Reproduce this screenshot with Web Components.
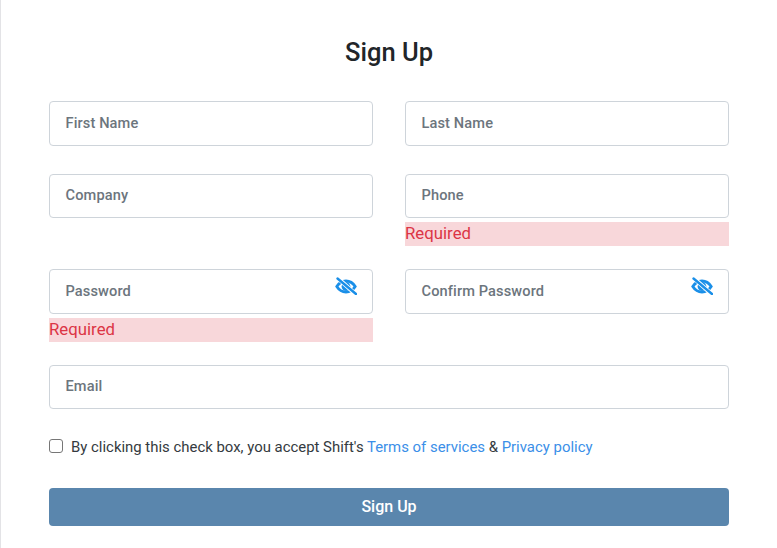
<!DOCTYPE html>
<html>
<head>
<meta charset="utf-8">
<title>Sign Up</title>
<style>
  html, body { margin: 0; background: #fff; }
  body { font-family: Roboto, "Liberation Sans", sans-serif; }
</style>
</head>
<body>
<signup-form>
  <form-field label="First Name"></form-field>
  <form-field label="Last Name"></form-field>
  <form-field label="Company"></form-field>
  <form-field label="Phone" error="Required"></form-field>
  <form-field label="Password" eye error="Required"></form-field>
  <form-field label="Confirm Password" eye></form-field>
  <form-field label="Email" class="wide"></form-field>
</signup-form>

<script>
'use strict'

const eyeOff = `
  <svg width="22" height="18" viewBox="0 0 22 18" fill="none" aria-hidden="true">
    <path d="M1.8 9.5 C4 6 7.5 4 11 4 C14.5 4 18 6 20.2 9.5 C18 13 14.5 15 11 15 C7.5 15 4 13 1.8 9.5 Z" stroke="#1a8fe8" stroke-width="2.8"/>
    <circle cx="11" cy="9.5" r="4.4" fill="#1a8fe8"/>
    <path d="M2 0.5 L21 17.5" stroke="#fff" stroke-width="4.2"/>
    <path d="M2.5 1.5 L21 17" stroke="#1a8fe8" stroke-width="2.4" stroke-linecap="round"/>
  </svg>`

customElements.define('form-field', class extends HTMLElement {
  constructor() {
    super()
    const label = this.getAttribute('label')
    const error = this.getAttribute('error')
    const eye = this.hasAttribute('eye')
    this.attachShadow({ mode: 'open' }).innerHTML = `
      <style>
        :host { display: block; min-width: 0; }
        .box {
          box-sizing: border-box;
          height: 44.7px;
          display: flex;
          align-items: center;
          justify-content: space-between;
          padding: 0 15px 1.6px 15.5px;
          background: #fff;
          border: 1px solid #ced4da;
          border-radius: 4px;
        }
        .label { font-size: 14.6px; font-weight: 500; color: #6c757d; letter-spacing: .12px; }
        .eye { display: flex; margin-top: -9px; }
        .error {
          height: 24px;
          margin-top: 4px;
          background: #f8d7da;
          color: #dc3545;
          font-size: 16.8px;
          line-height: 23px;
        }
        .spacer { height: 5.2px; }
      </style>
      <div class="box">
        <span class="label">${label}</span>
        ${eye ? `<span class="eye">${eyeOff}</span>` : ''}
      </div>
      ${error ? `<div class="error">${error}</div>` : '<div class="spacer"></div>'}
    `
  }
})

customElements.define('signup-form', class extends HTMLElement {
  constructor() {
    super()
    this.attachShadow({ mode: 'open' }).innerHTML = `
      <style>
        :host {
          display: block;
          box-sizing: border-box;
          width: 777px;
          height: 548px;
          overflow: hidden;
          padding: 38px 48px 0 48px;
          border-left: 1px solid #e3e3e6;
          font-family: Roboto, "Liberation Sans", sans-serif;
        }
        h1 {
          margin: 0 0 34px;
          height: 29px;
          font-size: 25.5px;
          line-height: 29px;
          font-weight: 500;
          color: #212529;
          text-align: center;
        }
        .grid {
          display: grid;
          grid-template-columns: 324px 324px;
          column-gap: 32px;
          row-gap: 22.8px;
          align-items: start;
        }
        ::slotted(.wide) { grid-column: 1 / 3; }
        .terms {
          display: flex;
          align-items: center;
          gap: 8.5px;
          margin-top: 22.8px;
          height: 20px;
          font-size: 14.92px;
          color: #343a40;
        }
        .check {
          box-sizing: border-box;
          width: 13.5px;
          height: 13.5px;
          margin-top: -3px;
          border: 1px solid #767676;
          border-radius: 3px;
          background: #fff;
        }
        a { color: #3b8fe8; text-decoration: none; }
        button {
          display: block;
          width: 680px;
          height: 38px;
          margin-top: 31px;
          padding: 0 0 2px;
          border: 0;
          border-radius: 4px;
          background: #5a86ad;
          color: #fff;
          font: 500 16px Roboto, "Liberation Sans", sans-serif;
        }
      </style>
      <h1>Sign Up</h1>
      <div class="grid"><slot></slot></div>
      <div class="terms">
        <span class="check"></span>
        <span>By clicking this check box, you accept Shift's <a>Terms of services</a> &amp; <a>Privacy policy</a></span>
      </div>
      <button type="button">Sign Up</button>
    `
  }
})
</script>
</body>
</html>
